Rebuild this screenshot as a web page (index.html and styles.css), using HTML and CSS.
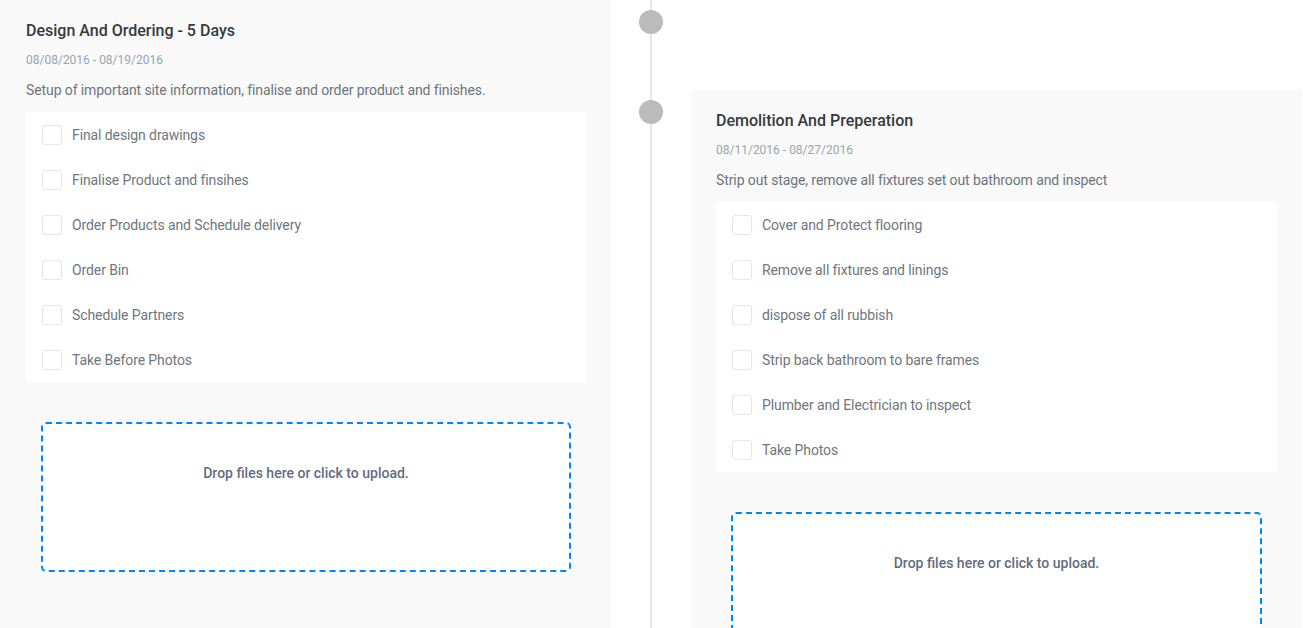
FILE: index.html
```html
<!DOCTYPE html>
<html>
<head>
<meta charset="utf-8">
<link rel="stylesheet" href="styles.css">
</head>
<body>
<div class="timeline">
  <section class="card">
    <h2 class="card-title">Design And Ordering - 5 Days</h2>
    <div class="card-date">08/08/2016 - 08/19/2016</div>
    <p class="card-desc">Setup of important site information, finalise and order product and finishes.</p>
    <ul class="checklist">
      <li class="check-item"><span class="box"></span>Final design drawings</li>
      <li class="check-item"><span class="box"></span>Finalise Product and finsihes</li>
      <li class="check-item"><span class="box"></span>Order Products and Schedule delivery</li>
      <li class="check-item"><span class="box"></span>Order Bin</li>
      <li class="check-item"><span class="box"></span>Schedule Partners</li>
      <li class="check-item"><span class="box"></span>Take Before Photos</li>
    </ul>
    <div class="dropzone"><span class="dz-msg">Drop files here or click to upload.</span></div>
  </section>
  <div class="axis">
    <span class="dot dot-first"></span>
    <span class="dot dot-second"></span>
  </div>
  <section class="card card-right">
    <h2 class="card-title">Demolition And Preperation</h2>
    <div class="card-date">08/11/2016 - 08/27/2016</div>
    <p class="card-desc">Strip out stage, remove all fixtures set out bathroom and inspect</p>
    <ul class="checklist">
      <li class="check-item"><span class="box"></span>Cover and Protect flooring</li>
      <li class="check-item"><span class="box"></span>Remove all fixtures and linings</li>
      <li class="check-item"><span class="box"></span>dispose of all rubbish</li>
      <li class="check-item"><span class="box"></span>Strip back bathroom to bare frames</li>
      <li class="check-item"><span class="box"></span>Plumber and Electrician to inspect</li>
      <li class="check-item"><span class="box"></span>Take Photos</li>
    </ul>
    <div class="dropzone"><span class="dz-msg">Drop files here or click to upload.</span></div>
  </section>
</div>
</body>
</html>
```
FILE: styles.css
```css
html, body {
  margin: 0;
  padding: 0;
  background: #ffffff;
  overflow: hidden;
  font-family: Roboto, "Liberation Sans", sans-serif;
}
.timeline {
  display: grid;
  grid-template-columns: 611px 80px 611px;
  align-items: start;
  height: 628px;
  overflow: hidden;
}
.card {
  background: #f9f9f9;
  padding: 21px 25px 56px 26px;
  box-sizing: border-box;
}
.card-right {
  margin-top: 90px;
  padding-left: 25px;
}
.card-title {
  margin: 0;
  font-size: 16px;
  line-height: 20px;
  font-weight: 500;
  color: #343a40;
}
.card-date {
  margin-top: 10px;
  font-size: 12px;
  line-height: 18px;
  color: #98a6ad;
}
.card-desc {
  margin: 11px 0 0;
  font-size: 14px;
  line-height: 20px;
  color: #6c757d;
  letter-spacing: -0.1px;
}
.checklist {
  list-style: none;
  margin: 12px 0 0;
  padding: 0;
  background: #ffffff;
  border-radius: 3px;
}
.check-item {
  display: flex;
  align-items: center;
  height: 45px;
  padding: 0 16px;
  font-size: 14px;
  color: #6f767d;
  letter-spacing: -0.1px;
}
.box {
  width: 20px;
  height: 20px;
  box-sizing: border-box;
  border: 1px solid #e3e6ea;
  border-radius: 3px;
  margin-right: 10px;
  flex: none;
}
.dropzone {
  margin: 40px 15px 0;
  height: 150px;
  box-sizing: border-box;
  border: 2px dashed #0087f7;
  border-radius: 5px;
  background: #ffffff;
  padding-top: 39px;
  text-align: center;
}
.dz-msg {
  font-size: 14px;
  line-height: 20px;
  font-weight: 500;
  color: #646c7f;
}
.axis {
  align-self: stretch;
  display: flex;
  flex-direction: column;
  align-items: center;
  background: linear-gradient(#e3e6ea, #e3e6ea) no-repeat center top / 2px 100%;
}
.dot {
  width: 24px;
  height: 24px;
  border-radius: 50%;
  background: #bbbbbb;
}
.dot-first {
  margin-top: 10px;
}
.dot-second {
  margin-top: 66px;
}
```
